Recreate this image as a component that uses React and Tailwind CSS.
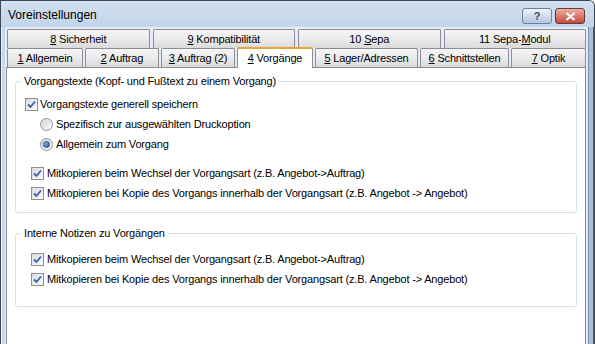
import { useState } from 'react';

const font = { fontFamily: '"Liberation Sans", Arial, sans-serif' };

const topTabs = [
  { pre: '', key: '8', post: ' Sicherheit' },
  { pre: '', key: '9', post: ' Kompatibilität' },
  { pre: '10 ', key: 'S', post: 'epa' },
  { pre: '11 Sepa-', key: 'M', post: 'odul' },
];

const bottomTabs = [
  { key: '1', post: ' Allgemein', w: 'w-[76px]' },
  { key: '2', post: ' Auftrag', w: 'w-[74px]' },
  { key: '3', post: ' Auftrag (2)', w: 'w-[74px]' },
  { key: '4', post: ' Vorgänge', w: 'w-[76px]' },
  { key: '5', post: ' Lager/Adressen', w: 'w-[103px]' },
  { key: '6', post: ' Schnittstellen', w: 'w-[89px]' },
  { key: '7', post: ' Optik', w: 'flex-1' },
];

function Tab({ tab, active, className }) {
  if (active) {
    return (
      <div className={`relative -mb-px h-[21px] -mt-[1px] rounded-t-[2px] border border-b-0 border-[#898c95] border-t-2 border-t-[#e9a53a] bg-white flex items-center justify-center text-black z-10 ${className}`}>
        <span><span className="underline">{tab.key}</span>{tab.post}</span>
      </div>
    );
  }
  return (
    <div className={`h-[19px] rounded-t-[2px] border border-b-0 border-[#8a8d95] bg-gradient-to-b from-[#f5f5f5] via-[#ebebeb] to-[#dadada] flex items-center justify-center text-black ${className}`}>
      <span>{tab.pre}<span className="underline">{tab.key}</span>{tab.post}</span>
    </div>
  );
}

function CheckBox() {
  return (
    <span className="w-[13px] h-[13px] border border-[#8e8f8f] bg-gradient-to-br from-[#dcdcdc] to-[#fbfbfb] flex items-center justify-center shrink-0">
      <svg width="9" height="9" viewBox="0 0 9 9">
        <path d="M1 4.5 L3.5 7 L8 1.5" fill="none" stroke="#3a5fb8" strokeWidth="1.8" />
      </svg>
    </span>
  );
}

function Radio({ checked }) {
  return (
    <span className="w-[13px] h-[13px] rounded-full border border-[#969696] bg-gradient-to-br from-[#d4d4d4] to-[#fafafa] flex items-center justify-center shrink-0">
      {checked && <span className="w-[7px] h-[7px] rounded-full bg-gradient-to-br from-[#8cc4f0] to-[#1b5aa8] border border-[#1c4f8c]" />}
    </span>
  );
}

function Row({ children, control, className }) {
  return (
    <div className={`flex items-center h-[20px] ${className}`}>
      {control}
      <span className="leading-none">{children}</span>
    </div>
  );
}

function Group({ title, children, className }) {
  return (
    <div className={`relative border border-[#d5dfe5] rounded-[3px] ${className}`}>
      <span className="absolute -top-[8px] left-[5px] bg-white px-[3px] leading-[14px]">{title}</span>
      {children}
    </div>
  );
}

export default function App() {
  const [tab] = useState(4);
  return (
    <div className="w-[595px] h-[344px] overflow-hidden bg-[#c9d9ed] border-l border-t border-r border-[#3b4656] rounded-tr-[6px] text-[11px] tracking-[-0.17px] text-black flex flex-col" style={font}>
      {/* Title bar */}
      <div className="h-[26px] shrink-0 flex items-center justify-between pl-[7px] pr-[9px] bg-gradient-to-b from-[#d2dfee] to-[#c3d5ea]">
        <span className="text-[12px] tracking-normal mt-[2px]">Voreinstellungen</span>
        <div className="flex gap-[3px] mt-[4px]">
          <div className="w-[30px] h-[16px] rounded-[3px] border border-[#6d7f99] bg-gradient-to-b from-[#eef3fa] to-[#b3c6dd] flex items-center justify-center text-[11px] font-bold text-[#3a4a60]">?</div>
          <div className="w-[30px] h-[16px] rounded-[3px] border border-[#6a3a35] bg-gradient-to-b from-[#eab0a4] to-[#c4473a] flex items-center justify-center">
            <svg width="11" height="9" viewBox="0 0 11 9">
              <path d="M1.5 1 L9.5 8 M9.5 1 L1.5 8" stroke="white" strokeWidth="2.2" />
            </svg>
          </div>
        </div>
      </div>

      {/* Body */}
      <div className="flex-1 flex flex-col pl-[5px] pr-[8px] bg-[#e4ecf6] shadow-[inset_-1px_0_0_#4a5a70,inset_-5px_0_0_#a9bfdb,inset_-6px_0_0_#7d90aa,inset_1px_0_0_#eef3f9,inset_4px_0_0_#c9d9ed]">
        <div className="pl-[1px] pt-[2px] flex gap-[3px]">
          {topTabs.map((t, i) => (
            <Tab key={i} tab={t} className="flex-1" />
          ))}
        </div>
        <div className="pl-[1px] flex gap-[2px]">
          {bottomTabs.map((t, i) => (
            <Tab key={i} tab={t} active={i + 1 === tab} className={t.w} />
          ))}
        </div>
        <div className="flex-1 bg-white border border-b-0 border-[#898c95] pt-[13px] px-[8px]">
          <Group title="Vorgangstexte (Kopf- und Fußtext zu einem Vorgang)" className="h-[132px] pt-[12px] pl-[9px]">
            <Row control={<CheckBox />}><span className="ml-[2px]">Vorgangstexte generell speichern</span></Row>
            <Row control={<Radio />} className="pl-[15px]"><span className="ml-[3px]">Spezifisch zur ausgewählten Druckoption</span></Row>
            <Row control={<Radio checked />} className="pl-[15px]"><span className="ml-[3px]">Allgemein zum Vorgang</span></Row>
            <div className="h-[9px]" />
            <Row control={<CheckBox />} className="pl-[6px]"><span className="ml-[3px]">Mitkopieren beim Wechsel der Vorgangsart (z.B. Angebot-&gt;Auftrag)</span></Row>
            <Row control={<CheckBox />} className="pl-[6px]"><span className="ml-[3px]">Mitkopieren bei Kopie des Vorgangs innerhalb der Vorgangsart (z.B. Angebot -&gt; Angebot)</span></Row>
          </Group>
          <Group title="Interne Notizen zu Vorgängen" className="mt-[20px] h-[74px] pt-[15px] pl-[15px]">
            <Row control={<CheckBox />}><span className="ml-[3px]">Mitkopieren beim Wechsel der Vorgangsart (z.B. Angebot-&gt;Auftrag)</span></Row>
            <Row control={<CheckBox />}><span className="ml-[3px]">Mitkopieren bei Kopie des Vorgangs innerhalb der Vorgangsart (z.B. Angebot -&gt; Angebot)</span></Row>
          </Group>
        </div>
      </div>
    </div>
  );
}
